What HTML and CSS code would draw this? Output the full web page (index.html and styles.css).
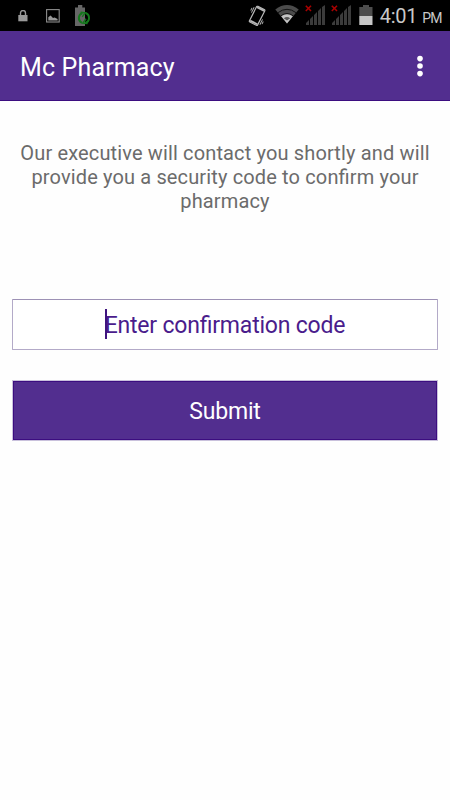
FILE: index.html
```
<!DOCTYPE html>
<html lang="en">
<head>
<meta charset="UTF-8" />
<meta name="viewport" content="width=device-width, initial-scale=1" />
<title>Mc Pharmacy</title>
<link rel="stylesheet" href="styles.css">
</head>
<body>
<div id="app">
  <div class="status-bar">
    <div class="notifications">
      <svg class="icon-lock" width="10" height="12" viewBox="0 0 10 12">
        <path d="M2.5 5V3a2.4 2.4 0 0 1 5 0v2" fill="none" stroke="#999" stroke-width="1.4" />
        <rect x="0.3" y="5" width="9.2" height="6.3" fill="#999" />
      </svg>
      <svg class="icon-image" width="14" height="14" viewBox="0 0 14 14">
        <rect x="0.6" y="0.6" width="12.6" height="12.4" fill="none" stroke="#8c8c8c" stroke-width="1.1" />
        <path d="M2.3 11.4V8.2L4.6 6.6 7 8.9 8.6 8.4 11.6 9.9V11.4z" fill="#999" />
      </svg>
      <svg class="icon-saver" width="16" height="22" viewBox="0 0 16 22">
        <path d="M3 0h4.3v2.4H10V21H0V2.4h3z" fill="#666" />
        <path d="M7 17.8A5.2 5.2 0 0 1 7.4 8.1M10.6 8A5.2 5.2 0 0 1 10.2 17.9" fill="none" stroke="#14781c" stroke-width="2" />
        <path d="M5.6 7.3l4.6.6-3 4M12.6 18.6l-4.8-.5 3.2-4.4" fill="none" stroke="#14781c" stroke-width="1.5" />
      </svg>
    </div>

    <div class="system">
      <svg class="icon-vibrate" width="18" height="22" viewBox="0 0 18 22">
        <g transform="rotate(27 9 11)" fill="none" stroke="#b8b8b8">
          <rect x="4.4" y="2" width="9.2" height="17.6" rx="1" stroke-width="1.2" />
          <path d="M5 3.2h8M5 18.2h8" stroke-width="1.8" />
          <path d="M2.5 4.5v6M.9 6v3M15.5 11.5v6M17.1 13v3" stroke-width=".9" />
        </g>
      </svg>
      <svg class="icon-wifi" width="24" height="19" viewBox="0 0 24 19">
        <path d="M.3 4.5Q12-4.4 23.7 4.5L12 18.5z" fill="#4b4b4b" />
        <path d="M2.9 7.7Q12 .9 21.1 7.7M5.7 11Q12 6.1 18.3 11" fill="none" stroke="#111" stroke-width="1" />
        <path d="M6.2 11.3Q12 7.2 17.8 11.3L12 18.5z" fill="#c4c4c4" />
        <path d="M8.8 13.2Q12 11 15.2 13.2L12 15.6z" fill="#555" />
      </svg>
      <svg class="icon-signal" width="21" height="20" viewBox="0 0 21 20">
        <path d="M1 20v-2l3-3v5zM5 20v-6l3-3v9zM9 20V10l3-3v13zM13 20V6l3-3v17zM17 20V2l3-2v20z" fill="#3b3b3b" />
        <path d="M.8 .8l5.2 5.2M6 .8L.8 6" stroke="#a80000" stroke-width="1.6" />
      </svg>
      <svg class="icon-signal" width="21" height="20" viewBox="0 0 21 20">
        <path d="M1 20v-2l3-3v5zM5 20v-6l3-3v9zM9 20V10l3-3v13zM13 20V6l3-3v17zM17 20V2l3-2v20z" fill="#3b3b3b" />
        <path d="M.8 .8l5.2 5.2M6 .8L.8 6" stroke="#a80000" stroke-width="1.6" />
      </svg>
      <svg class="icon-battery" width="14" height="20" viewBox="0 0 14 20">
        <path d="M4 0h6v2h3.5v9H.3V2H4z" fill="#4d4d4d" />
        <rect x="0.3" y="11" width="13.2" height="9" fill="#c6c6c6" />
      </svg>
      <span class="time">4:01</span>
      <span class="period">PM</span>
    </div>
  </div>

  <header>
    <h1>Mc Pharmacy</h1>
    <button type="button" class="menu-btn" aria-label="Menu">
      <svg width="8" height="22" viewBox="0 0 8 22" fill="#fff">
        <circle cx="4" cy="3.6" r="2.8" />
        <circle cx="4" cy="11" r="2.8" />
        <circle cx="4" cy="18.6" r="2.8" />
      </svg>
    </button>
  </header>

  <main>
    <p class="message">Our executive will contact you shortly and will provide you a security code to confirm your pharmacy</p>

    <form id="confirm-form">
      <div class="field">
        <input type="text" id="code" name="code" placeholder="Enter confirmation code" aria-label="Confirmation code" />
        <span class="caret"></span>
      </div>
      <button type="submit" class="submit-btn">Submit</button>
    </form>
  </main>
</div>
</body>
</html>
```
FILE: styles.css
```
* {
  box-sizing: border-box;
}

body {
  font-family: Roboto, sans-serif;
  margin: 0;
  background: #fefefe;
}

#app {
  min-height: 100vh;
}

svg {
  display: block;
  flex: none;
}

/* Android status bar */
.status-bar {
  display: flex;
  justify-content: space-between;
  height: 31px;
  padding: 5px 8px 0 18px;
  background: #000;
  color: #c8c8c8;
}

.notifications,
.system {
  display: flex;
  align-items: flex-start;
}

.icon-lock {
  margin-top: 5px;
}

.icon-image {
  margin: 4px 0 0 18px;
}

.icon-saver {
  margin-left: 15px;
}

.icon-wifi {
  margin: 0 6px 0 9px;
}

.icon-signal {
  margin-right: 5px;
}

.icon-battery {
  margin: 0 7px 0 2px;
}

.time {
  font-size: 20px;
  line-height: 23px;
  letter-spacing: -0.3px;
}

.period {
  margin-left: 5px;
  font-size: 14px;
  line-height: 27px;
  letter-spacing: -0.6px;
}

/* Title bar */
header {
  display: flex;
  justify-content: space-between;
  align-items: center;
  height: 70px;
  padding: 0 26px 0 20px;
  background: #522e8f;
  border-bottom: 1px solid #3c0d80;
  color: #fff;
}

h1 {
  margin: 5px 0 0;
  font-size: 25px;
  font-weight: 400;
  line-height: 30px;
  letter-spacing: 0.15px;
}

.menu-btn {
  padding: 0;
  border: none;
  background: none;
  cursor: pointer;
}

main {
  padding: 40px 12px 0;
}

.message {
  margin: 0;
  color: #6b6b6b;
  font-size: 20px;
  line-height: 24px;
  letter-spacing: 0.14px;
  font-feature-settings: "liga";
  text-align: center;
}

form {
  display: flex;
  flex-direction: column;
  gap: 30px;
  margin-top: 86px;
}

.field {
  position: relative;
}

input {
  display: block;
  width: 100%;
  height: 51px;
  padding: 2px 0 0;
  border: 1px solid #b3aac8;
  border-top-color: #9d91b5;
  border-radius: 1px;
  background: #fff;
  color: #4a1c8c;
  font: 23px Roboto, sans-serif;
  font-feature-settings: "liga";
  letter-spacing: -0.2px;
  text-align: center;
  outline: none;
}

input::placeholder {
  color: #4a1c8c;
  opacity: 1;
}

.caret {
  position: absolute;
  top: 10px;
  left: 93px;
  width: 2px;
  height: 30px;
  background: #3f147f;
}

.submit-btn {
  height: 61px;
  padding: 2px 0 0;
  border: 1px solid #c9c1dc;
  background: #522e8f;
  box-shadow: inset 0 0 0 1px #3c0d80;
  color: #fff;
  font: 23px Roboto, sans-serif;
  letter-spacing: -0.2px;
  cursor: pointer;
}
```
